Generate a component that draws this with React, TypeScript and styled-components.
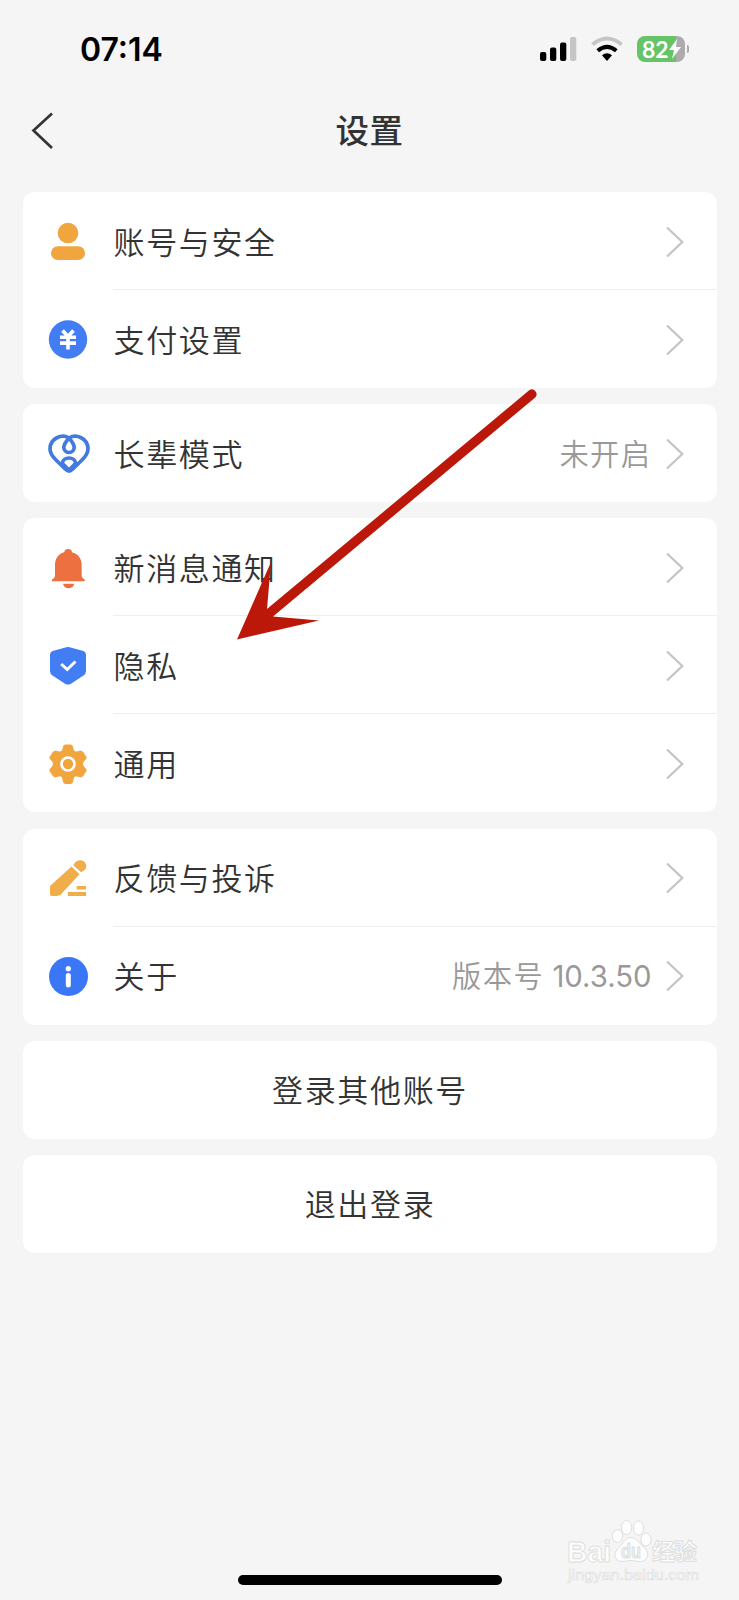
import React from "react";
import styled, { createGlobalStyle } from "styled-components";

const GlobalStyle = createGlobalStyle`
  * { box-sizing: border-box; }
  html, body { margin: 0; padding: 0; background: #f5f5f5; }
  body { font-family: Inter, "Noto Sans CJK SC", sans-serif; color: #333; }
`;

const Screen = styled.div`
  position: relative;
  width: 739px;
  height: 1600px;
  overflow: hidden;
  background: #f5f5f5;
`;

const StatusBar = styled.header`
  display: flex;
  align-items: center;
  justify-content: space-between;
  height: 98px;
  padding: 0 54px 0 80px;
`;

const Clock = styled.span`
  padding-top: 2px;
  font-size: 32px;
  font-weight: 600;
  line-height: 40px;
  letter-spacing: 0;
  color: #000;
`;

const StatusIcons = styled.div`
  display: flex;
  align-items: center;
  gap: 14px;
`;

const Battery = styled.div`
  position: relative;
  display: flex;
  align-items: center;
  width: 48px;
  height: 26px;
  padding-left: 5px;
  border-radius: 8px;
  background: linear-gradient(to right, #64c466 39px, #acacac 39px);
  color: #fff;
  font: 700 23px/26px Lato, sans-serif;

  &::after {
    content: "";
    position: absolute;
    right: -4px;
    top: 9px;
    width: 2.5px;
    height: 8px;
    border-radius: 0 3px 3px 0;
    background: #acacac;
  }
`;

const NavBar = styled.nav`
  display: grid;
  grid-template-columns: 80px 1fr 80px;
  align-items: center;
  height: 94px;
  padding-bottom: 28px;
`;

const BackButton = styled.button`
  display: flex;
  padding: 0 0 0 31px;
  border: 0;
  background: none;
`;

const Title = styled.h1`
  margin: 0;
  text-align: center;
  font-size: 33.5px;
  font-weight: 500;
  line-height: 44px;
  letter-spacing: 0.5px;
`;

const Groups = styled.main`
  display: flex;
  flex-direction: column;
  gap: 16.2px;
  padding: 0 22.5px;
`;

const Card = styled.section`
  border-radius: 12px;
  background: #fff;
  overflow: hidden;
`;

const Row = styled.div`
  display: flex;
  align-items: center;
  height: 98px;
  padding-left: 22px;
`;

const IconSlot = styled.div`
  display: flex;
  flex: 0 0 48px;
  padding-top: 2.5px;
`;

const RowBody = styled.div<{ $divided?: boolean }>`
  display: flex;
  flex: 1;
  align-items: center;
  height: 98px;
  margin-left: 20px;
  padding: 2px 33px 0 0;
  border-bottom: 1px solid ${(p) => (p.$divided ? "#efefef" : "transparent")};
`;

const Label = styled.span`
  flex: 1;
  padding: 2px 0 0 1px;
  font-size: 31px;
  font-weight: 350;
  line-height: 44px;
  letter-spacing: 1.65px;
`;

const Value = styled.span`
  margin-right: 14px;
  padding-top: 2px;
  font-size: 29.3px;
  line-height: 40px;
  color: #999;
`;

const Spaced = styled.span`
  font-weight: 350;
  letter-spacing: 1.4px;
`;

const Action = styled.button`
  display: block;
  width: 100%;
  height: 98px;
  padding: 0 0 2px 1px;
  border: 0;
  border-radius: 12px;
  background: #fff;
  color: #333;
  font-family: inherit;
  font-size: 31px;
  font-weight: 350;
  letter-spacing: 1.65px;
`;

const Arrow = styled.svg`
  position: absolute;
  left: 0;
  top: 0;
  pointer-events: none;
`;

const HomeIndicator = styled.div`
  position: absolute;
  left: 238px;
  bottom: 15px;
  width: 264px;
  height: 10px;
  border-radius: 5px;
  background: #000;
`;

const Watermark = styled.svg`
  position: absolute;
  left: 560px;
  top: 1515px;
`;

const Chevron = () => (
  <svg width="18" height="32" viewBox="0 0 18 32" fill="none" stroke="#c4c4c4" strokeWidth="2.2">
    <path d="M1 1.500 16.300 16 1 30.500" />
  </svg>
);

const orange = "#f0a53f";
const blue = "#437df4";

const icons: Record<string, React.ReactNode> = {
  user: (
    <g fill={orange}>
      <circle cx="23" cy="15" r="10.3" />
      <rect x="6" y="28.3" width="34" height="13.7" rx="6.8" />
    </g>
  ),
  pay: (
    <>
      <circle cx="23" cy="23.500" r="19.2" fill={blue} />
      <path d="m17.500 14.500 5.500 6 5.500-6M15 21.200h16M15 27.100h16M23 20.500v13" stroke="#fff" strokeWidth="3.600" fill="none" />
    </>
  ),
  care: (
    <g fill="none" stroke="#427ade" strokeWidth="3.700" strokeLinejoin="round">
      <path d="M24 8C17 3.700 5 8 5 19c0 5 3 8 6 11l9.500 9.200c2.500 2.500 4.500 2.500 7 0L37 30c3-3 6-6 6-11C43 8 31 3.700 24 8Z" />
      <path d="M24 8c-3 3.500-5.200 6.500-5.200 9.300a5.200 5.200 0 0 0 10.400 0C29.200 14.500 27 11.500 24 8Z" />
      <path d="M17 34c1-8 13-8 14 0M18 34l6 6 6-6" />
    </g>
  ),
  bell: (
    <g fill="#ed7041">
      <path d="M7 36.200v-1.500c0-.8 3-1.500 3-4V20c0-7 4-11.600 9.300-12.800C19.300 2.800 27 2.800 27 7.200 32.500 8.500 36.700 13 36.700 20v10.700c0 2.500 3 3.200 3 4v1.500Z" />
      <path d="M18 38.700h11.200c-1 6-10.200 6-11.200 0Z" />
    </g>
  ),
  shield: (
    <>
      <path d="m21.300 4.200-13.700 3.800Q5 9 5 11.500V28q0 3 2.500 4.500L20 40.700q3 1.800 6 0l12.500-8.200Q41 31 41 28V11.500Q41 9 38.400 8l-13.700-3.800q-1.700-.5-3.400 0Z" fill={blue} />
      <path d="m16.200 21 6 5.500 8.300-8" stroke="#fff" strokeWidth="3" fill="none" />
    </>
  ),
  gear: (
    <>
      <path d="M20.500 3.500h5q2 0 2.400 2l.8 3q.7 2.500 3 2l3-.7q2-.5 3.500 1.200l3 4.500q1 1.700-.5 3l-1.700 1.800q-2 2.700 0 5.300l1.700 1.800q1.500 1.300.5 3l-3 4.500q-1.500 1.700-3.500 1.200l-3-.7q-2.300-.5-3 2l-.8 3.500q-.4 2-2.400 2h-5q-2 0-2.400-2l-.8-3.500q-.7-2.500-3-2l-3 .7q-2 .5-3.500-1.200l-3-4.500q-1-1.700.5-3L7 25.600q2-2.600 0-5.300l-1.700-1.800q-1.500-1.300-.5-3l3-4.500q1.500-1.700 3.500-1.200l3 .7q2.300.5 3-2l.8-3q.4-2 2.400-2Z" fill={orange} />
      <circle cx="23" cy="23" r="6.500" stroke="#fff" strokeWidth="2.700" fill="none" />
    </>
  ),
  pencil: (
    <g fill="#f0ad49">
      <path d="M5 31 26.500 11.500l8 7.800L16 39.200q-1.800 1.800-4.500 1.800H7q-2 0-2-2Z" />
      <path d="M28.300 10.200C31.500 3 41 4 41.300 11.300c.1 3-2 4.500-5.300 6Z" />
      <path d="M31.700 31H41v3.600h-9.300ZM23 37h18v4H23Z" />
    </g>
  ),
  info: (
    <>
      <circle cx="23.500" cy="23.500" r="19.500" fill="#3a77f6" />
      <circle cx="23.300" cy="15.700" r="2.600" fill="#fff" />
      <path d="M23.300 22.500v9.500" stroke="#fff" strokeWidth="5" strokeLinecap="round" />
    </>
  ),
};

type Item = { icon: string; label: string; value?: React.ReactNode };

const groups: Item[][] = [
  [
    { icon: "user", label: "账号与安全" },
    { icon: "pay", label: "支付设置" },
  ],
  [{ icon: "care", label: "长辈模式", value: <Spaced>未开启</Spaced> }],
  [
    { icon: "bell", label: "新消息通知" },
    { icon: "shield", label: "隐私" },
    { icon: "gear", label: "通用" },
  ],
  [
    { icon: "pencil", label: "反馈与投诉" },
    { icon: "info", label: "关于", value: <><Spaced>版本号</Spaced> 10.3.50</> },
  ],
];

export default function App() {
  return (
    <>
      <GlobalStyle />
      <Screen>
        <StatusBar>
          <Clock>07:14</Clock>
          <StatusIcons>
            <svg width="37" height="26" viewBox="0 0 37 26">
              <rect x="0" y="16" width="6.300" height="9" rx="2" />
              <rect x="10" y="11.500" width="6.300" height="13.500" rx="2" />
              <rect x="20" y="6.500" width="6.300" height="18.500" rx="2" />
              <rect x="30" y="1" width="6.300" height="24" rx="2" fill="#c5c5c5" />
            </svg>
            <svg width="32" height="26" viewBox="0 0 32 26" fill="none" strokeWidth="4">
              <path d="M1.500 8.500Q16-3.500 30.500 8.500" stroke="#c5c5c5" />
              <path d="M6.700 14.800Q16 6.800 25.300 14.800" stroke="#000" />
              <path d="M11 19.300q5-4.200 10 0L16 25Z" fill="#000" />
            </svg>
            <Battery>
              82
              <svg width="12" height="22" viewBox="0 0 12 22" fill="#fff">
                <path d="M8 1 0 12h5L3 21l9-12H7Z" />
              </svg>
            </Battery>
          </StatusIcons>
        </StatusBar>
        <NavBar>
          <BackButton aria-label="返回">
            <svg width="23" height="38" viewBox="0 0 23 38" fill="none" stroke="#333" strokeWidth="2.700">
              <path d="M21 1.500 2.500 18.500 21 36" />
            </svg>
          </BackButton>
          <Title>设置</Title>
        </NavBar>
        <Groups>
          {groups.map((items) => (
            <Card key={items[0].icon}>
              {items.map((item, i) => (
                <Row key={item.icon}>
                  <IconSlot>
                    <svg width="48" height="48" viewBox="0 0 48 48">{icons[item.icon]}</svg>
                  </IconSlot>
                  <RowBody $divided={i < items.length - 1}>
                    <Label>{item.label}</Label>
                    {item.value && <Value>{item.value}</Value>}
                    <Chevron />
                  </RowBody>
                </Row>
              ))}
            </Card>
          ))}
          <Action>登录其他账号</Action>
          <Action>退出登录</Action>
        </Groups>
        <Watermark width="150" height="70" viewBox="0 0 150 70" fill="#fdfdfd" stroke="#dedede" strokeWidth="1">
          <ellipse cx="57.500" cy="21" rx="5.200" ry="6.500" />
          <ellipse cx="66.500" cy="12.500" rx="5.200" ry="7" />
          <ellipse cx="78.500" cy="13" rx="5.200" ry="7" />
          <ellipse cx="86" cy="24.500" rx="5.200" ry="6.500" />
          <path d="M71 22.500c-6 0-8 6-12 10-7 6-4 14 3 14 4 0 5-1 9-1s5 1 9 1c7 0 11-8 4-14-5-4-7-10-13-10Z" />
          <text x="7" y="46.500" fontFamily="Liberation Sans" fontWeight="700" fontSize="30" textLength="44" lengthAdjust="spacingAndGlyphs">Bai</text>
          <text x="61" y="43" fontFamily="Liberation Sans" fontWeight="700" fontSize="20" fill="#f0f0f0" textLength="20" lengthAdjust="spacingAndGlyphs">du</text>
          <text x="92" y="45" fontFamily="Noto Sans CJK SC" fontWeight="700" fontSize="23" textLength="45">经验</text>
          <text x="8" y="64.500" fontFamily="Liberation Sans" fontSize="14.500" strokeWidth=".6" textLength="131" lengthAdjust="spacingAndGlyphs">jingyan.baidu.com</text>
        </Watermark>
        <HomeIndicator />
        <Arrow width="739" height="700" viewBox="0 0 739 700" fill="#bc1809">
          <path d="M237 639.500 271 562 267 609 529.500 390a4.800 4.800 0 0 1 6 7.200L273 616.500 319 620.500Z" />
        </Arrow>
      </Screen>
    </>
  );
}
